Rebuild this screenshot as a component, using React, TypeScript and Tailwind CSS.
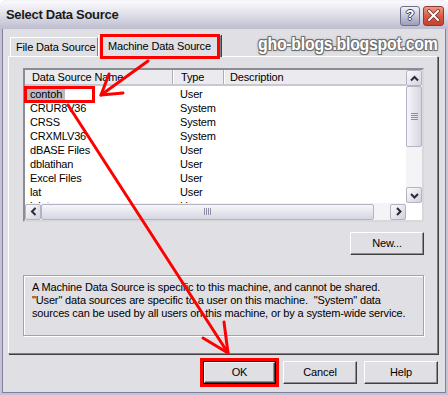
import React from 'react';

const rows: [string, string][] = [
  ['contoh', 'User'],
  ['CRUR8V36', 'System'],
  ['CRSS', 'System'],
  ['CRXMLV36', 'System'],
  ['dBASE Files', 'User'],
  ['dblatihan', 'User'],
  ['Excel Files', 'User'],
  ['lat', 'User'],
  ['lalat', 'User'],
];

const Chevron = ({ dir }: { dir: 'up' | 'down' | 'left' | 'right' }) => {
  const pts = {
    up: '1,5.5 4.5,2 8,5.5',
    down: '1,2 4.5,5.5 8,2',
    left: '5.5,1 2,4.5 5.5,8',
    right: '2,1 5.5,4.5 2,8',
  }[dir];
  const vertical = dir === 'up' || dir === 'down';
  return (
    <svg width={vertical ? 9 : 7} height={vertical ? 7 : 9} viewBox={vertical ? '0 0 9 7' : '0 0 7 9'}>
      <polyline points={pts} fill="none" stroke="#2a2a38" strokeWidth="2" />
    </svg>
  );
};

const ScrollBtn = ({ dir }: { dir: 'up' | 'down' | 'left' | 'right' }) => (
  <div className="w-[16px] h-[16px] shrink-0 rounded-[2px] border border-[#b3b3c4] bg-gradient-to-br from-[#fbfbfd] to-[#d2d2de] flex items-center justify-center">
    <Chevron dir={dir} />
  </div>
);

const Button = ({ label, isDefault }: { label: string; isDefault?: boolean }) => (
  <div className={`relative h-[23px] flex items-center justify-center bg-[#e0dfe3] ${isDefault ? 'w-[73px] border border-black' : 'w-[74px]'}`}>
    <div className="absolute inset-0 border-t border-l border-white border-r border-b border-r-[#404040] border-b-[#404040] shadow-[inset_-1px_-1px_0_#8d8d93]" />
    <span className="relative text-[11px] text-black">{label}</span>
  </div>
);

export default function App() {
  return (
    <div className="relative w-[448px] h-[395px] overflow-hidden rounded-t-[7px] bg-[#e0dfe3] font-['Liberation_Sans',Arial,sans-serif] text-black select-none">
      {/* Title bar */}
      <div className="h-[29px] flex items-center justify-between pl-[6px] pr-[4px] rounded-t-[7px] border-t border-[#f4f4f8] bg-gradient-to-b from-[#fbfbfd] via-[#dedee8] to-[#bdbdcf]">
        <span className="text-[13px] font-bold tracking-[-0.3px] text-[#1a1a1a]">Select Data Source</span>
        <div className="flex gap-[3px] mt-[1px]">
          <div className="w-[20px] h-[20px] rounded-[3px] border border-[#6f6f8c] bg-gradient-to-b from-[#f2f2f8] to-[#9d9db8] flex items-center justify-center">
            <span className="text-[14px] font-bold text-white [text-shadow:1px_0_0_#404060,-1px_0_0_#404060,0_1px_0_#404060,0_-1px_0_#404060]">?</span>
          </div>
          <div className="w-[21px] h-[20px] rounded-[3px] border border-[#8e3a2e] bg-gradient-to-b from-[#ec9a8a] via-[#dc5a45] to-[#c63f2c] flex items-center justify-center">
            <svg width="13" height="13" viewBox="0 0 13 13">
              <path d="M2 2 L11 11 M11 2 L2 11" stroke="#7a2a20" strokeWidth="3.6" strokeLinecap="square" />
              <path d="M2 2 L11 11 M11 2 L2 11" stroke="#ffffff" strokeWidth="2" strokeLinecap="square" />
            </svg>
          </div>
        </div>
      </div>

      {/* Frame + body */}
      <div className="h-[366px] border-l-2 border-r-2 border-b-2 border-[#c3c3d3]">
        <div className="h-full border-l border-r border-b border-[#80809e] pl-[5px] pr-[6px] text-[11px] tracking-[-0.15px]">
          {/* Tabs */}
          <div className="h-[27px] flex items-end pl-[2px]">
            <div className="w-[88px] h-[19px] whitespace-nowrap border-t border-l border-white border-r border-r-[#808080] shadow-[1px_0_0_#404040] flex items-center pl-[5px]">
              File Data Source
            </div>
            <div className="relative w-[123px] h-[22px] -mb-[1px] whitespace-nowrap bg-[#e0dfe3] border-t border-l border-white border-r border-r-[#808080] shadow-[1px_0_0_#404040] flex items-start pt-[2px] pl-[9px] z-10">
              Machine Data Source
              <div className="absolute left-[1px] -top-[2px] w-[120px] h-[25px] border-[3px] border-[#ff0000]" />
            </div>
          </div>

          {/* Tab panel */}
          <div className="w-[430px] h-[298px] border-t border-l border-white border-r border-b border-r-[#808080] border-b-[#808080] shadow-[1px_1px_0_#404040] pl-[14px] pr-[13px] pt-[11px]">
            {/* List view */}
            <div className="relative w-[401px] h-[154px] bg-white border-2 border-t-[#8c8c94] border-l-[#8c8c94] border-r-[#d8d8dc] border-b-[#d8d8dc] flex flex-col">
              <div className="flex h-[133px]">
                <div className="w-[381px] flex flex-col overflow-hidden">
                  <div className="h-[16px] flex bg-[#ebeaee] border-b-2 border-[#c9c8cf] shrink-0">
                    <div className="w-[148px] pl-[7px] border-r border-[#aeadb5] shadow-[1px_0_0_#ffffff] flex items-center">Data Source Name</div>
                    <div className="w-[51px] pl-[8px] border-r border-[#aeadb5] shadow-[1px_0_0_#ffffff] flex items-center">Type</div>
                    <div className="flex-1 pl-[6px] flex items-center">Description</div>
                  </div>
                  <div className="pt-[1px]">
                    {rows.map(([name, type], i) => (
                      <div key={name} className="h-[14px] flex items-center">
                        <div className="w-[148px] pl-[2px]">
                          <span className={`px-[3px] ${i === 0 ? 'bg-[#bab9c4]' : ''}`}>{name}</span>
                        </div>
                        <div className="w-[51px] pl-[7px]">{type}</div>
                      </div>
                    ))}
                  </div>
                </div>
                {/* Vertical scrollbar */}
                <div className="w-[16px] flex flex-col bg-[#f4f4f7]">
                  <ScrollBtn dir="up" />
                  <div className="flex-1 flex flex-col">
                    <div className="h-[61px] rounded-[2px] border border-[#b3b3c4] bg-gradient-to-r from-[#f6f6fa] to-[#d6d6e2] flex flex-col items-center justify-center gap-[1px]">
                      <div className="w-[7px] h-px bg-[#8e8ea4]" />
                      <div className="w-[7px] h-px bg-[#8e8ea4]" />
                      <div className="w-[7px] h-px bg-[#8e8ea4]" />
                      <div className="w-[7px] h-px bg-[#8e8ea4]" />
                    </div>
                  </div>
                  <ScrollBtn dir="down" />
                </div>
              </div>
              {/* Horizontal scrollbar */}
              <div className="h-[17px] flex bg-[#f4f4f7]">
                <div className="w-[381px] flex items-center">
                  <ScrollBtn dir="left" />
                  <div className="w-[333px] h-[16px] rounded-[2px] border border-[#b3b3c4] bg-gradient-to-b from-[#f6f6fa] to-[#d6d6e2] flex items-center justify-center gap-[1px]">
                    <div className="w-px h-[7px] bg-[#8e8ea4]" />
                    <div className="w-px h-[7px] bg-[#8e8ea4]" />
                    <div className="w-px h-[7px] bg-[#8e8ea4]" />
                    <div className="w-px h-[7px] bg-[#8e8ea4]" />
                  </div>
                  <div className="flex-1" />
                  <ScrollBtn dir="right" />
                </div>
                <div className="flex-1 bg-white" />
              </div>
              <div className="absolute left-[-1px] top-[16px] w-[71px] h-[17px] border-[3px] border-[#ff0000]" />
            </div>

            {/* New button */}
            <div className="flex justify-end mt-[10px]">
              <Button label="New..." />
            </div>

            {/* Info box */}
            <div className="mt-[20px] w-[401px] h-[61px] border border-[#a2a2a8] shadow-[1px_1px_0_#ffffff,inset_1px_1px_0_#ffffff] pl-[8px] pt-[5px] leading-[13px] whitespace-pre">
              <div>A Machine Data Source is specific to this machine, and cannot be shared.</div>
              <div>{'"User" data sources are specific to a user on this machine.  "System" data'}</div>
              <div>sources can be used by all users on this machine, or by a system-wide service.</div>
            </div>
          </div>

          {/* Dialog buttons */}
          <div className="flex justify-end gap-[7px] mt-[7px] pr-[1px]">
            <div className="relative">
              <Button label="OK" isDefault />
              <div className="absolute -inset-[3px] border-[3px] border-[#ff0000]" />
            </div>
            <Button label="Cancel" />
            <Button label="Help" />
          </div>
        </div>
      </div>

      {/* Watermark */}
      <div className="absolute left-[258px] top-[30px] text-[19px] font-bold text-white tracking-[-0.3px] origin-left [transform:scaleX(0.835)] [text-shadow:1px_1px_0_#6e6e6e,-1px_-1px_0_#6e6e6e,1px_-1px_0_#6e6e6e,-1px_1px_0_#6e6e6e,0_0_3px_#555555] whitespace-nowrap">
        gho-blogs.blogspot.com
      </div>

      {/* Annotation arrows */}
      <svg className="absolute inset-0 pointer-events-none" width="448" height="395" viewBox="0 0 448 395">
        <g stroke="#ff0000" strokeWidth="3" fill="none" strokeLinecap="round" strokeLinejoin="round">
          <path d="M148 61 L101 95" />
          <path d="M123 93 L101 95 L109 74" />
          <path d="M68 105 L228 353" />
          <path d="M203 338 L228 353 L224 322" />
        </g>
      </svg>
    </div>
  );
}
